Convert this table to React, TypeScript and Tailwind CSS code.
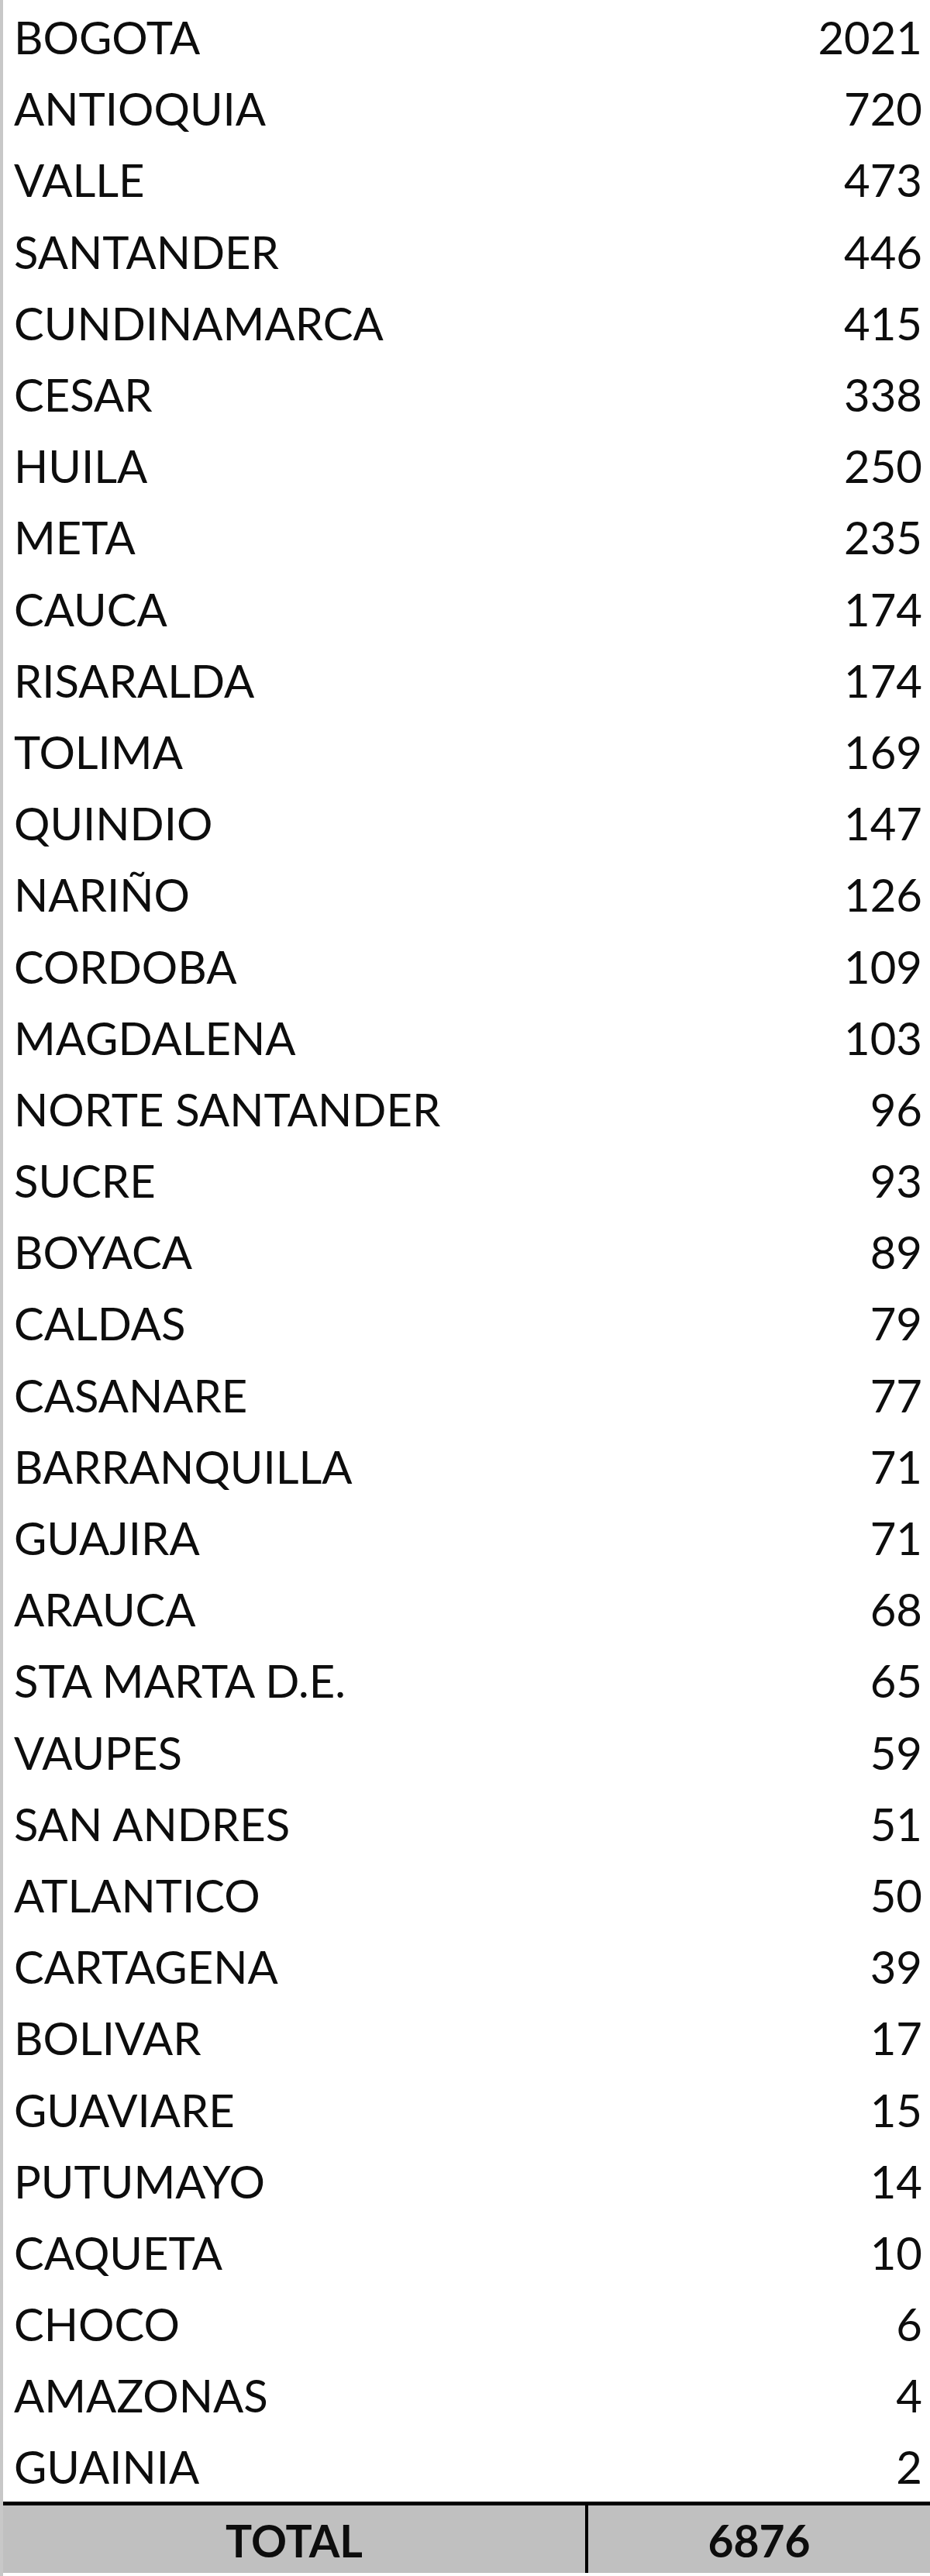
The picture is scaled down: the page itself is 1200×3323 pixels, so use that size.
import React from 'react';

interface Row {
  name: string;
  count: number;
}

const rows: Row[] = [
  { name: 'BOGOTA', count: 2021 },
  { name: 'ANTIOQUIA', count: 720 },
  { name: 'VALLE', count: 473 },
  { name: 'SANTANDER', count: 446 },
  { name: 'CUNDINAMARCA', count: 415 },
  { name: 'CESAR', count: 338 },
  { name: 'HUILA', count: 250 },
  { name: 'META', count: 235 },
  { name: 'CAUCA', count: 174 },
  { name: 'RISARALDA', count: 174 },
  { name: 'TOLIMA', count: 169 },
  { name: 'QUINDIO', count: 147 },
  { name: 'NARIÑO', count: 126 },
  { name: 'CORDOBA', count: 109 },
  { name: 'MAGDALENA', count: 103 },
  { name: 'NORTE SANTANDER', count: 96 },
  { name: 'SUCRE', count: 93 },
  { name: 'BOYACA', count: 89 },
  { name: 'CALDAS', count: 79 },
  { name: 'CASANARE', count: 77 },
  { name: 'BARRANQUILLA', count: 71 },
  { name: 'GUAJIRA', count: 71 },
  { name: 'ARAUCA', count: 68 },
  { name: 'STA MARTA D.E.', count: 65 },
  { name: 'VAUPES', count: 59 },
  { name: 'SAN ANDRES', count: 51 },
  { name: 'ATLANTICO', count: 50 },
  { name: 'CARTAGENA', count: 39 },
  { name: 'BOLIVAR', count: 17 },
  { name: 'GUAVIARE', count: 15 },
  { name: 'PUTUMAYO', count: 14 },
  { name: 'CAQUETA', count: 10 },
  { name: 'CHOCO', count: 6 },
  { name: 'AMAZONAS', count: 4 },
  { name: 'GUAINIA', count: 2 },
];

const total = rows.reduce((sum, r) => sum + r.count, 0);

const App: React.FC = () => {
  return (
    <div
      className="w-[1200px] h-[3323px] bg-white text-[#0d0d0d] overflow-hidden border-l-4 border-[#c8c8c8]"
      style={{ fontFamily: 'Lato, "Open Sans", sans-serif' }}
    >
      <div className="flex flex-col">
        {rows.map((row, i) => (
          <div
            key={i}
            className="h-[92.2px] flex items-center justify-between pl-[14px] pr-[10px] text-[58px] leading-none"
          >
            <span className="pt-[4px]">{row.name}</span>
            <span className="pt-[4px]">{row.count}</span>
          </div>
        ))}
      </div>
      <div className="border-t-[5px] border-black bg-[#c0c0c0] h-[92px] flex text-[57px] font-bold leading-none">
        <div className="w-[751px] flex items-center justify-center pt-[4px]">TOTAL</div>
        <div className="w-[4px] bg-black" />
        <div className="flex-1 flex items-center justify-center pt-[4px]">{total}</div>
      </div>
    </div>
  );
};

export default App;
